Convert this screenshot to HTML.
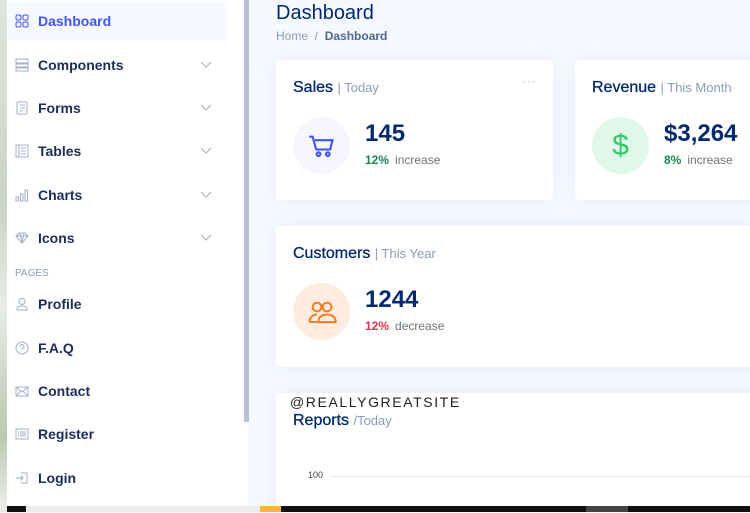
<!DOCTYPE html>
<html><head><style>
*{margin:0;padding:0;box-sizing:border-box}
body{width:750px;height:512px;overflow:hidden;position:relative;background:#f6f9ff;font-family:"Liberation Sans",sans-serif;color:#012970}
.leaf{position:absolute;left:0;top:0;width:8px;height:512px;background:linear-gradient(#dfe6dc,#c9d5c3 40%,#e8ece4 60%,#b9c9b0 85%,#eef0ea)}
.side{position:absolute;left:7px;top:0;width:241px;height:506px;background:#fff}
.scroll{position:absolute;left:244px;top:0;width:5px;height:422px;background:#b7c0d9}
.item{position:absolute;left:15px;height:20px;display:flex;align-items:center;font-size:14px;font-weight:bold;color:#1a2d5c}
.item svg{width:14px;height:14px;margin-right:9px;stroke:#a3afc8;fill:none;stroke-width:1}
.chev{position:absolute;left:200px;width:12px;height:8px}
.active{position:absolute;left:8px;top:2px;width:219px;height:38px;background:#f6f9ff}
.card{position:absolute;background:#fff;border-radius:4px;box-shadow:0 0 20px rgba(1,41,112,.06)}
.ct{position:absolute;left:17px;top:19px;font-size:16px;color:#012970;white-space:nowrap;-webkit-text-stroke:0.3px #012970}
.ct span{font-size:13px;font-weight:normal;color:#899bbd;-webkit-text-stroke:0}
.ic{position:absolute;left:17px;top:57px;width:57px;height:57px;border-radius:50%}
.num{position:absolute;left:89px;top:60px;font-size:24px;font-weight:bold;color:#012970}
.sub{position:absolute;left:89px;top:93px;font-size:12px;color:#6c757d;white-space:nowrap}
.sub b{margin-right:6px}
</style></head><body>
<div class="leaf"></div>
<div class="side"></div>
<div class="active"></div>
<div class="scroll"></div>
<div class="item" style="top:11px;color:#4154f1"><svg viewBox="0 0 14 14" style="stroke:#4154f1"><rect x="1" y="1" width="5" height="5" rx="1.5"/><rect x="8" y="1" width="5" height="5" rx="1.5"/><rect x="1" y="8" width="5" height="5" rx="1.5"/><rect x="8" y="8" width="5" height="5" rx="1.5"/></svg>Dashboard</div>
<div class="item" style="top:55px"><svg viewBox="0 0 14 14"><rect x="1" y="1" width="12" height="4"/><rect x="1" y="6" width="12" height="3"/><rect x="1" y="10" width="12" height="3"/></svg>Components</div>
<div class="item" style="top:98px"><svg viewBox="0 0 14 14"><rect x="2" y="1" width="10" height="12" rx="1"/><path d="M5 4h5M5 7h5M5 10h3"/></svg>Forms</div>
<div class="item" style="top:141px"><svg viewBox="0 0 14 14"><rect x="1" y="1" width="12" height="12"/><path d="M4 1v12M6 4h5M6 7h5M6 10h5"/></svg>Tables</div>
<div class="item" style="top:185px"><svg viewBox="0 0 14 14"><rect x="1" y="9" width="2.5" height="4"/><rect x="5.5" y="6" width="2.5" height="7"/><rect x="10" y="2" width="2.5" height="11"/></svg>Charts</div>
<div class="item" style="top:228px"><svg viewBox="0 0 14 14"><path d="M1 5l3-3h6l3 3-6 7z M1 5h12 M5 2l2 10 2-10"/></svg>Icons</div>
<svg class="chev" style="top:61px" viewBox="0 0 12 8"><path d="M1 1l5 5 5-5" stroke="#aab" fill="none"/></svg>
<svg class="chev" style="top:104px" viewBox="0 0 12 8"><path d="M1 1l5 5 5-5" stroke="#aab" fill="none"/></svg>
<svg class="chev" style="top:147px" viewBox="0 0 12 8"><path d="M1 1l5 5 5-5" stroke="#aab" fill="none"/></svg>
<svg class="chev" style="top:191px" viewBox="0 0 12 8"><path d="M1 1l5 5 5-5" stroke="#aab" fill="none"/></svg>
<svg class="chev" style="top:234px" viewBox="0 0 12 8"><path d="M1 1l5 5 5-5" stroke="#aab" fill="none"/></svg>
<div style="position:absolute;left:15px;top:268px;font-size:10px;color:#899bbd">PAGES</div>
<div class="item" style="top:294px"><svg viewBox="0 0 14 14"><circle cx="7" cy="4.5" r="3"/><path d="M2 13v-1c0-2 2-3 5-3s5 1 5 3v1z"/></svg>Profile</div>
<div class="item" style="top:338px"><svg viewBox="0 0 14 14"><circle cx="7" cy="7" r="6"/><path d="M5 5.5c0-2.5 4-2.5 4 0 0 1.5-2 1.5-2 3M7 10.5v.5"/></svg>F.A.Q</div>
<div class="item" style="top:381px"><svg viewBox="0 0 14 14"><rect x="1" y="3" width="12" height="9"/><path d="M1 3l6 5 6-5M1 12l4.5-4.5M13 12l-4.5-4.5"/></svg>Contact</div>
<div class="item" style="top:424px"><svg viewBox="0 0 14 14"><rect x="1" y="2" width="12" height="10"/><path d="M3 5h1M5 5h6M3 7h1M5 7h6M3 9h1M5 9h6"/></svg>Register</div>
<div class="item" style="top:468px"><svg viewBox="0 0 14 14"><path d="M6 2h6v10H6M1 7h7M5.5 4.5L8 7l-2.5 2.5"/></svg>Login</div>

<div style="position:absolute;left:276px;top:2px;font-size:20px;color:#012970">Dashboard</div>
<div style="position:absolute;left:276px;top:29px;font-size:12px;color:#899bbd">Home &nbsp;/&nbsp; <span style="color:#51678f;font-weight:bold">Dashboard</span></div>

<div class="card" style="left:276px;top:60px;width:277px;height:140px">
<div class="ct">Sales <span>| Today</span></div>
<div style="position:absolute;left:246px;top:14px;color:#aab7cf;font-size:12px;letter-spacing:1px">···</div>
<div class="ic" style="background:#f6f6fe"><svg viewBox="0 0 24 24" width="28" height="28" style="margin:15px" fill="none" stroke="#4154f1" stroke-width="1.8"><path d="M1 4h3l3 11h12l2-8H6"/><circle cx="9" cy="19" r="1.6"/><circle cx="17" cy="19" r="1.6"/></svg></div>
<div class="num">145</div>
<div class="sub"><b style="color:#198754">12%</b>increase</div>
</div>

<div class="card" style="left:575px;top:60px;width:200px;height:140px">
<div class="ct">Revenue <span>| This Month</span></div>
<div class="ic" style="background:#e0f8e9;color:#2eca6a;font-size:30px;text-align:center;line-height:57px">$</div>
<div class="num">$3,264</div>
<div class="sub"><b style="color:#198754">8%</b>increase</div>
</div>

<div class="card" style="left:276px;top:226px;width:490px;height:141px">
<div class="ct">Customers <span>| This Year</span></div>
<div class="ic" style="background:#ffecdf"><svg viewBox="0 0 24 24" width="30" height="30" style="margin:14px" fill="none" stroke="#ff771d" stroke-width="1.5"><circle cx="8" cy="8" r="3.5"/><circle cx="16" cy="8" r="3.5"/><path d="M2 20c0-4 3-6 6-6M9 20c0-4 3-6 7-6s7 2 7 6z"/><path d="M2 20h6"/></svg></div>
<div class="num">1244</div>
<div class="sub"><b style="color:#dc3545">12%</b>decrease</div>
</div>

<div class="card" style="left:276px;top:393px;width:490px;height:120px">
<div style="position:absolute;left:14px;top:1px;font-size:14px;letter-spacing:1.6px;color:#222">@REALLYGREATSITE</div>
<div style="position:absolute;left:17px;top:19px;font-size:16px;color:#012970;-webkit-text-stroke:0.3px #012970">Reports <span style="font-size:13px;font-weight:normal;color:#899bbd;-webkit-text-stroke:0">/Today</span></div>
<div style="position:absolute;left:32px;top:77px;font-size:9px;color:#444">100</div>
<div style="position:absolute;left:56px;top:83px;width:440px;height:1px;background:#e5e5e5"></div>
</div>

<div style="position:absolute;left:0;top:506px;width:750px;height:6px;background:#111"></div>
<div style="position:absolute;left:0;top:506px;width:7px;height:6px;background:#e8ece4"></div>
<div style="position:absolute;left:26px;top:506px;width:236px;height:6px;background:#ececec"></div>
<div style="position:absolute;left:260px;top:506px;width:21px;height:6px;background:#f5b82e"></div>
<div style="position:absolute;left:586px;top:506px;width:42px;height:6px;background:#444"></div>
</body></html>
